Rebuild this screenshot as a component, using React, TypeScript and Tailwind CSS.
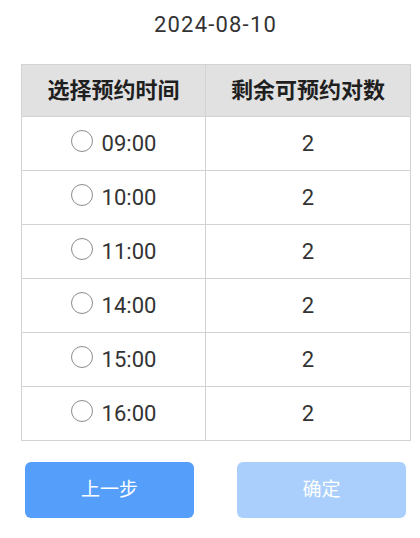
import React, { useState } from 'react';

const slots = [
  { time: '09:00', left: 2 },
  { time: '10:00', left: 2 },
  { time: '11:00', left: 2 },
  { time: '14:00', left: 2 },
  { time: '15:00', left: 2 },
  { time: '16:00', left: 2 },
];

const font = { fontFamily: 'Roboto, "Noto Sans CJK SC", sans-serif' };

export default function App() {
  const [picked, setPicked] = useState<string | null>(null);

  return (
    <div className="min-h-[538px] bg-white pl-[21px] pr-[10px] pt-[9px]" style={font}>
      <div className="text-center text-[22px] leading-[32px] tracking-[1.2px] text-[#333]">2024-08-10</div>

      <table className="mt-[23px] w-[389px] border-collapse table-fixed">
        <colgroup>
          <col className="w-[184px]" />
          <col className="w-[205px]" />
        </colgroup>
        <thead>
          <tr className="h-[52px] bg-[#e1e1e1]">
            <th className="border border-[#d3d3d3] text-[22px] font-bold text-[#1f1f1f]">选择预约时间</th>
            <th className="border border-[#d3d3d3] text-[22px] font-bold text-[#1f1f1f]">剩余可预约对数</th>
          </tr>
        </thead>
        <tbody>
          {slots.map(s => (
            <tr key={s.time} className="h-[54px]">
              <td className="border border-[#d3d3d3] text-center">
                <label className="inline-flex items-center gap-[9px] cursor-pointer" onClick={() => setPicked(s.time)}>
                  <span className="-mt-[6px] flex h-[22px] w-[22px] items-center justify-center rounded-full border-[1.5px] border-[#8c8c8c]">
                    {picked === s.time && <span className="h-[12px] w-[12px] rounded-full bg-[#559ffa]" />}
                  </span>
                  <span className="text-[22px] text-[#333]">{s.time}</span>
                </label>
              </td>
              <td className="border border-[#d3d3d3] text-center text-[22px] text-[#333]">{s.left}</td>
            </tr>
          ))}
        </tbody>
      </table>

      <div className="mt-[21px] flex justify-between px-[4px]">
        <button className="h-[56px] w-[169px] rounded-[6px] bg-[#559ffa] text-[19px] text-white">上一步</button>
        <button disabled={!picked} className="h-[56px] w-[169px] rounded-[6px] bg-[#559ffa] text-[19px] text-white disabled:bg-[#aacffc]">
          确定
        </button>
      </div>
    </div>
  );
}
